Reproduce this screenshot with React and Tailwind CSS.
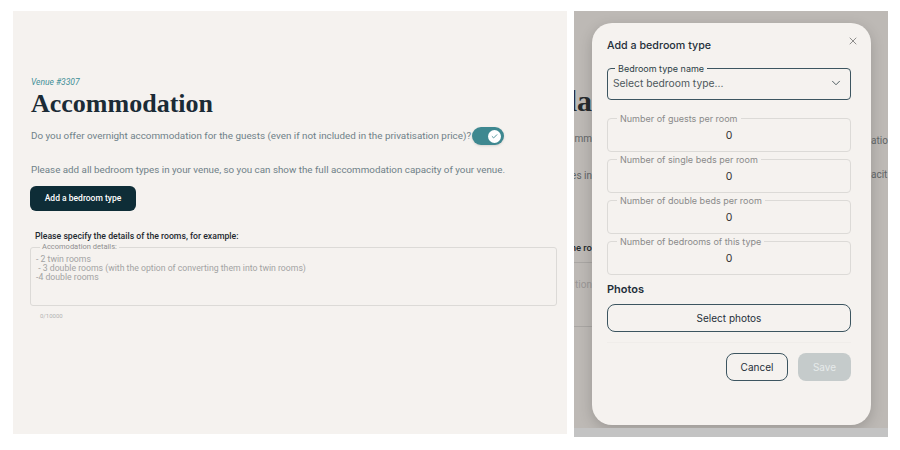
import { ChevronDown, X, Check } from "lucide-react";

const fieldLabels = [
  "Number of guests per room",
  "Number of single beds per room",
  "Number of double beds per room",
  "Number of bedrooms of this type",
];

function NumberField({ label }) {
  return (
    <fieldset className="border border-[#dcdad7] rounded-[4px] h-[38px] pl-[9px] pr-[9px]">
      <legend className="px-[3px] text-[9px] leading-[9px] text-[#8a8a8a]">{label}</legend>
      <div className="text-center text-[10.5px] leading-[26px] text-[#333]">0</div>
    </fieldset>
  );
}

function LeftPanel() {
  return (
    <div
      className="w-[554px] h-[423px] bg-[#f5f2ef] pl-[18px] pr-[10px] pt-[66px] text-[#6f8188]"
      style={{ fontFamily: "Roboto, 'Noto Sans', sans-serif" }}
    >
      <div className="text-[8.5px] leading-[11px] italic text-[#3f8e97]">Venue #3307</div>
      <h1
        className="mt-[1px] text-[26px] leading-[30px] font-bold text-[#1b2b36]"
        style={{ fontFamily: "'Liberation Serif', serif" }}
      >
        Accommodation
      </h1>
      <div className="mt-[8px] flex items-center">
        <span className="text-[9.85px] leading-[18px]">
          Do you offer overnight accommodation for the guests (even if not included in the privatisation price)?
        </span>
        <span className="ml-[1px] w-[32px] h-[18px] rounded-full bg-[#3e8890] flex items-center justify-end pr-[3px] shadow-sm">
          <span className="w-[13px] h-[13px] rounded-full bg-white flex items-center justify-center">
            <Check className="w-[7px] h-[7px] text-[#3e8890]" strokeWidth={3} />
          </span>
        </span>
      </div>
      <p className="mt-[18px] text-[9.8px] leading-[14px]">
        Please add all bedroom types in your venue, so you can show the full accommodation capacity of your venue.
      </p>
      <button className="mt-[9px] -ml-[1px] w-[106px] h-[25px] rounded-[6px] bg-[#0e2d37] text-white text-[8.5px] font-medium">
        Add a bedroom type
      </button>
      <p className="mt-[19px] ml-[4px] text-[8.7px] leading-[12px] font-medium text-[#1f2a30]">
        Please specify the details of the rooms, for example:
      </p>
      <fieldset className="-ml-[1px] mt-[1px] w-[527px] h-[63px] border border-[#dcdad7] rounded-[3px] pl-[5px]">
        <legend className="ml-[4px] px-[2px] text-[7.5px] leading-[8px] text-[#8f8f8f]">Accomodation details:</legend>
        <div className="text-[8.7px] leading-[9px] text-[#a3a3a3] whitespace-pre mt-[4px]">
          {"- 2 twin rooms\n - 3 double rooms (with the option of converting them into twin rooms)\n-4 double rooms"}
        </div>
      </fieldset>
      <div className="mt-[6px] ml-[9px] text-[6px] leading-[8px] text-[#b3b3b3]">0/10000</div>
    </div>
  );
}

function Modal() {
  return (
    <div
      className="mt-[12px] w-[279px] h-[402px] rounded-[20px] bg-[#f5f2ef] shadow-[0_4px_14px_rgba(0,0,0,0.18)] pl-[15px] pr-[20px] pt-[15px] flex flex-col"
      style={{ fontFamily: "Inter, 'Liberation Sans', sans-serif" }}
    >
      <div className="flex justify-between items-start -mr-[8px]">
        <div className="mt-[1px] text-[10.7px] leading-[14px] font-medium text-[#1f2f3a]">Add a bedroom type</div>
        <X className="w-[12px] h-[12px] -mt-[3px] text-[#555]" strokeWidth={1.3} />
      </div>
      <fieldset className="mt-[11px] border-[1.5px] border-[#3c5560] rounded-[4px] h-[36px] pl-[7px] pr-[7px]">
        <legend className="px-[3px] text-[9px] leading-[9px] text-[#2c3e46]">Bedroom type name</legend>
        <div className="flex items-center justify-between -ml-[2px]">
          <span className="text-[10.3px] leading-[20px] text-[#4e585c]">Select bedroom type...</span>
          <ChevronDown className="w-[14px] h-[14px] text-[#3a4a50]" strokeWidth={1.5} />
        </div>
      </fieldset>
      <div className="mt-[14px] flex flex-col gap-[3px]">
        {fieldLabels.map((l) => (
          <NumberField key={l} label={l} />
        ))}
      </div>
      <div className="mt-[7px] text-[11px] leading-[14px] font-semibold text-[#1f2f3a]">Photos</div>
      <button className="mt-[8px] h-[28px] rounded-[8px] border border-[#3c5560] text-[10px] text-[#1f2f3a]">
        Select photos
      </button>
      <div className="mt-[10px] h-px bg-[#f0edea]" />
      <div className="mt-[10px] flex justify-end gap-[10px]">
        <button className="w-[62px] h-[28px] rounded-[8px] border border-[#3c5560] text-[10px] text-[#1f2f3a]">
          Cancel
        </button>
        <button className="w-[53px] h-[28px] rounded-[8px] bg-[#c5cbcb] text-[10px] text-[#e6eaea]">Save</button>
      </div>
    </div>
  );
}

function RightPanel() {
  return (
    <div className="w-[314px] h-[426px] bg-[#bdb9b5] flex flex-col overflow-hidden">
      <div className="flex h-[417px]">
        <div className="w-[18px] overflow-hidden flex flex-col items-end text-[#5f6466] whitespace-nowrap">
          <div
            className="mt-[74px] text-[30px] leading-[32px] font-bold text-[#262b2e]"
            style={{ fontFamily: "'Liberation Serif', serif" }}
          >
            la
          </div>
          <div className="mt-[16px] text-[10px] leading-[12px]" style={{ fontFamily: "Roboto, sans-serif" }}>mm</div>
          <div className="mt-[25px] text-[10px] leading-[12px]" style={{ fontFamily: "Roboto, sans-serif" }}>es in</div>
          <div className="mt-[60px] text-[9.5px] leading-[12px] font-medium text-[#252a2c]" style={{ fontFamily: "Roboto, sans-serif" }}>he ro</div>
          <div className="mt-[8px] w-full h-px bg-[#a9a6a3]" />
          <div className="mt-[16px] text-[10px] leading-[12px] text-[#9a9795]" style={{ fontFamily: "Roboto, sans-serif" }}>tion</div>
          <div className="mt-[35px] w-full h-px bg-[#a9a6a3]" />
        </div>
        <Modal />
        <div className="w-[17px] overflow-hidden flex flex-col text-[#5f6466] whitespace-nowrap" style={{ fontFamily: "Roboto, sans-serif" }}>
          <div className="mt-[124px] text-[10px] leading-[12px]">atio</div>
          <div className="mt-[22px] text-[10px] leading-[12px]">acit</div>
        </div>
      </div>
      <div className="h-[9px] bg-[#c3c3c3]" />
    </div>
  );
}

export default function App() {
  return (
    <div className="w-[900px] h-[450px] bg-white flex pl-[13px] pt-[11px] gap-[7px]">
      <LeftPanel />
      <RightPanel />
    </div>
  );
}
